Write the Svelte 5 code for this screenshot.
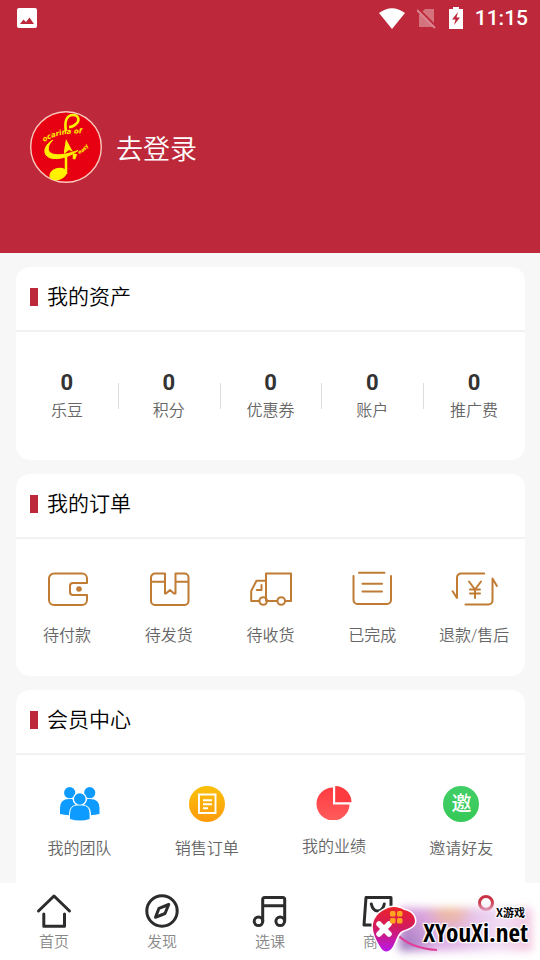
<script lang="ts">
  type Item = { icon: string; label: string };

  const assets = [
    { label: '乐豆', value: 0 },
    { label: '积分', value: 0 },
    { label: '优惠券', value: 0 },
    { label: '账户', value: 0 },
    { label: '推广费', value: 0 },
  ];

  const orders: Item[] = [
    { icon: 'wallet', label: '待付款' },
    { icon: 'parcel', label: '待发货' },
    { icon: 'truck', label: '待收货' },
    { icon: 'done', label: '已完成' },
    { icon: 'refund', label: '退款/售后' },
  ];

  const member: Item[] = [
    { icon: 'team', label: '我的团队' },
    { icon: 'sales', label: '销售订单' },
    { icon: 'chart', label: '我的业绩' },
    { icon: 'invite', label: '邀请好友' },
  ];

  const tabs: Item[] = [
    { icon: 'home', label: '首页' },
    { icon: 'compass', label: '发现' },
    { icon: 'music', label: '选课' },
    { icon: 'shop', label: '商城' },
    { icon: 'me', label: '' },
  ];
</script>

<div class="page">
  <header>
    <div class="status">
      <svg width="20" height="20" viewBox="0 0 20 20" aria-hidden="true">
        <rect width="20" height="20" rx="2" fill="#fff" />
        <path d="M3 16l3.500-4.500 2.500 2.500 3.500-4.500L17 16z" fill="#bd293a" />
      </svg>
      <div class="status-right">
        <svg width="26" height="21" viewBox="0 0 26 21" aria-hidden="true">
          <path d="M0 5Q13-4.500 26 5L13 21z" fill="#fff" />
        </svg>
        <svg width="20" height="21" viewBox="0 0 20 21" aria-hidden="true">
          <path d="M2 7l6-6h9v18H2z" fill="#fff" opacity=".35" />
          <path d="M1 1l18 18" stroke="#bd293a" stroke-width="3" />
          <path d="M0 2l18 18" stroke="#db8590" stroke-width="2" />
        </svg>
        <svg width="14" height="22" viewBox="0 0 14 22" aria-hidden="true">
          <path d="M0 2h4V0h6v2h4v20H0z" fill="#fff" />
          <path d="M9 5L3 12.500h3.500L5 18l6-7.500H7.500z" fill="#bd293a" />
        </svg>
        <span class="time">11:15</span>
      </div>
    </div>
    <button class="profile">
      <svg width="72" height="72" viewBox="0 0 72 72" aria-hidden="true">
        <circle cx="36" cy="36" r="35.300" fill="#e60012" stroke="#f8c9bd" stroke-width="1.400" />
        <path d="M36 20C34 10 37 4 43 4c6 0 7 6 3 9-2 2-4 3-7 3" fill="none" stroke="#fff100" stroke-width="2.600" />
        <path d="M23 29C12 35 12 47 24 47.500c9 .500 17-3 24-8-9 3-16 5-23 4-9-1-8-9-2-14.500z" fill="#fff100" stroke="#fff100" />
        <path d="M34 40l2-12 7 13-4-2-5 4z" fill="#fff100" />
        <path d="M36 46v17M44 43v5l2-5" stroke="#fff100" stroke-width="2.500" fill="none" />
        <ellipse cx="28" cy="63" rx="9" ry="6" transform="rotate(-18 28 63)" fill="#fff100" />
        <path id="arc-top" d="M14 31Q30 20 60 23" fill="none" />
        <path id="arc-side" d="M49 43Q57 40 60 31" fill="none" />
        <text class="logo-top"><textPath href="#arc-top">ocarina of</textPath></text>
        <text class="logo-side"><textPath href="#arc-side">easy</textPath></text>
      </svg>
      <span>去登录</span>
    </button>
  </header>

  <main>
    <section>
      <h2>我的资产</h2>
      <ul class="assets">
        {#each assets as asset}
          <li>
            <button>
              <strong>{asset.value}</strong>
              <span>{asset.label}</span>
            </button>
          </li>
        {/each}
      </ul>
    </section>

    <section>
      <h2>我的订单</h2>
      <ul class="orders">
        {#each orders as item}
          <li>
            <button>
              <svg class="line" width="46" height="36" viewBox="-2 0 46 36" aria-hidden="true">
                {#if item.icon === 'wallet'}
                  <path d="M41 12V7.500a5 5 0 0 0-5-5H8a5 5 0 0 0-5 5V29a5 5 0 0 0 5 5h28a5 5 0 0 0 5-5v-5H27a3 3 0 0 1-3-3v-6a3 3 0 0 1 3-3z" />
                  <circle class="dot" cx="33" cy="18" r="2.800" />
                {:else if item.icon === 'parcel'}
                  <path d="M17 2.500H7a4 4 0 0 0-4 4V30a4 4 0 0 0 4 4h29.500a4 4 0 0 0 4-4V6.500a4 4 0 0 0-4-4H27.500V22.500h-1.500l-4-3.500-4 3.500h-1zM3 10.700h14M27.500 10.700h13" />
                {:else if item.icon === 'truck'}
                  <path d="M10.400 30H2.200V20L7.500 9.700H17M17 30V2.500h25V30h-6M18 30h10.400M12.500 14v5H7.800" />
                  <circle cx="14.200" cy="30" r="3.800" />
                  <circle cx="32.200" cy="30" r="3.800" />
                {:else if item.icon === 'done'}
                  <path d="M8 1.800h25.500M2.500 5v24a4 4 0 0 0 4 4H36a4 4 0 0 0 4-4V5M11.500 12.800h19.500M11.500 20.500h19.500" />
                {:else}
                  <path d="M31.200 2.500H8a4 4 0 0 0-4 4V27L-.400 20.300M12.500 33.500h23a4 4 0 0 0 4-4V7.500l4.400 7.500" />
                  <path d="M16 10.500l6 8 6-8M22 18.500V27M17 18.500h10M17 22.500h10" />
                {/if}
              </svg>
              <span>{item.label}</span>
            </button>
          </li>
        {/each}
      </ul>
    </section>

    <section>
      <h2>会员中心</h2>
      <ul class="member">
        {#each member as item}
          <li>
            <button>
              {#if item.icon === 'team'}
                <svg width="40" height="36" viewBox="0 0 40 36" fill="#0d9bff" aria-hidden="true">
                  <path d="M0 28V22Q0 13 9 13h21q9.500 0 9.500 9v6q-6 1.500-12 1H12q-6 .500-12-1z" />
                  <path d="M9 35V28q0-8 7-9.500a7.500 7.500 0 1 1 7.500 0Q31 20 31 28v7z" fill="#fff" />
                  <circle cx="9.700" cy="6.700" r="5.600" />
                  <circle cx="29.700" cy="6.700" r="5.600" />
                  <circle cx="19.800" cy="13" r="7" fill="#fff" />
                  <circle cx="19.800" cy="13" r="5.800" />
                  <path d="M10 33V28q0-8.500 7-8.500h5.600q7 0 7 8.500v5q-9.600 3-19.600 0z" />
                </svg>
              {:else if item.icon === 'sales'}
                <svg width="36" height="36" viewBox="0 0 36 36" aria-hidden="true">
                  <linearGradient id="gold" x2="0" y2="1">
                    <stop stop-color="#f9c10b" />
                    <stop offset="1" stop-color="#ff9a0c" />
                  </linearGradient>
                  <circle cx="18" cy="18" r="18" fill="url(#gold)" />
                  <path d="M10 8.500h16.500v18.500H10zM14 14.300h9M14 18.300h9M14 22.300h5" fill="none" stroke="#fff" stroke-width="1.900" />
                </svg>
              {:else if item.icon === 'chart'}
                <svg width="36" height="34" viewBox="0 0 36 34" aria-hidden="true">
                  <linearGradient id="coral" x2="0" y2="1">
                    <stop stop-color="#ff3b40" />
                    <stop offset="1" stop-color="#ff5c5c" />
                  </linearGradient>
                  <path d="M17 1.500v17h16.500A16.500 16.500 0 1 1 17 1.500z" fill="url(#coral)" />
                  <path d="M19.200 0A16.500 16.500 0 0 1 35.500 16.200H19.200z" fill="#fc3b40" />
                </svg>
              {:else}
                <b class="invite" aria-hidden="true">邀</b>
              {/if}
              <span>{item.label}</span>
            </button>
          </li>
        {/each}
      </ul>
    </section>
  </main>

  <nav>
    {#each tabs as tab}
      <a href="#{tab.icon}" aria-label={tab.label || '我的'}>
        <svg class="tab-icon" width="36" height="36" viewBox="0 0 36 36" aria-hidden="true">
          {#if tab.icon === 'home'}
            <path d="M2.500 18L18 3l15.500 15M7.800 21v12.300h20.700V21" />
          {:else if tab.icon === 'compass'}
            <circle cx="18" cy="18" r="15.200" />
            <path d="M24.700 11.500L15 15.300l-3.500 9 9.500-3.800z" />
          {:else if tab.icon === 'music'}
            <path d="M10.700 28V6.500a2 2 0 0 1 2-2h18a2 2 0 0 1 2 2V28M10.700 12.700h22" />
            <circle cx="6.500" cy="28.300" r="4.300" />
            <circle cx="28.200" cy="28.300" r="4.300" />
          {:else if tab.icon === 'shop'}
            <path d="M6 4.500h25V32H4zM11.300 11q1.500 7 6.500 7t6.500-7" />
          {:else}
            <circle class="active" cx="18" cy="10" r="6.500" />
          {/if}
        </svg>
        <span>{tab.label}</span>
      </a>
    {/each}
  </nav>

  <div class="badge">
    <div class="glow"></div>
    <svg class="pad" width="48" height="50" viewBox="0 0 48 50" aria-hidden="true">
      <linearGradient id="pad-fill" x2="0" y2="1">
        <stop stop-color="#ee2228" />
        <stop offset=".45" stop-color="#d31a5c" />
        <stop offset="1" stop-color="#b819e8" />
      </linearGradient>
      <path d="M26 30q12 14 40 16" fill="none" stroke="#e0409a" stroke-width="2" />
      <path d="M13 6C20 1 29 3 33 6c7 1 11 6 11 11 0 6-8 8-13 10-5 3-6 11-10 17-3 4-8 5-11 0C5 36 1 28 2 20 3 14 8 8 13 6z" fill="url(#pad-fill)" stroke="#fff" stroke-width="3" paint-order="stroke" />
      <path d="M8 20l10 10M18 20L8 30" stroke="#fff" stroke-width="5.500" stroke-linecap="round" />
      <g fill="#ffa51f">
        <rect x="19" y="7" width="5.500" height="5.500" rx="1.500" />
        <rect x="26" y="7" width="5.500" height="5.500" rx="1.500" />
        <rect x="19" y="14" width="5.500" height="5.500" rx="1.500" />
        <rect x="26" y="14" width="5.500" height="5.500" rx="1.500" />
      </g>
    </svg>
    <div class="badge-text">
      <small>X游戏</small>
      <b>XYouXi.net</b>
    </div>
  </div>
</div>

<style>
  :global(body) {
    margin: 0;
    font-family: Roboto, "Noto Sans CJK SC", sans-serif;
  }
  .page {
    position: relative;
    display: flex;
    flex-direction: column;
    height: 100vh;
    overflow: hidden;
    background: #f7f7f7;
  }
  button {
    padding: 0;
    border: 0;
    background: none;
    color: inherit;
    font: inherit;
    cursor: pointer;
  }
  svg { display: block; flex-shrink: 0; }

  header {
    flex-shrink: 0;
    padding-bottom: 70px;
    background: #bd293a;
    color: #fff;
  }
  .status {
    display: flex;
    align-items: center;
    justify-content: space-between;
    height: 36px;
    padding: 0 12px 0 17px;
  }
  .status-right { display: flex; align-items: center; gap: 12px; }
  .time { font-size: 21px; font-weight: 500; line-height: 24px; }
  .profile {
    display: flex;
    align-items: center;
    gap: 14px;
    margin: 75px 30px 0;
    font-size: 27px;
    font-weight: 350;
    line-height: 36px;
  }
  .profile span { padding-top: 6px; }
  .logo-top, .logo-side {
    fill: #fff100;
    font-family: "DejaVu Sans", sans-serif;
    font-weight: bold;
    font-style: italic;
  }
  .logo-top { font-size: 7px; }
  .logo-side { font-size: 5px; }

  main {
    flex: 1;
    min-height: 0;
    padding: 14px 15px 0 16px;
    overflow-y: auto;
    scrollbar-width: none;
  }
  section {
    margin-bottom: 14px;
    border-radius: 14px;
    background: #fff;
  }
  h2 {
    display: flex;
    align-items: center;
    gap: 9px;
    height: 60px;
    margin: 0;
    padding: 0 0 3px 14px;
    border-bottom: 2px solid #f2f2f2;
    color: #000;
    font-size: 21px;
    font-weight: 350;
    line-height: 27px;
  }
  h2::before { content: ''; width: 8px; height: 18px; background: #bd293a; }
  ul {
    display: flex;
    margin: 0;
    padding: 0;
    list-style: none;
  }
  li { flex: 1; }
  li button {
    display: flex;
    flex-direction: column;
    align-items: center;
    width: 100%;
  }
  li span {
    color: #666;
    font-size: 16px;
    font-weight: 350;
    line-height: 24px;
    white-space: nowrap;
  }
  .assets { padding: 37px 0 35px; }
  .assets li { position: relative; }
  .assets li + li::before {
    content: '';
    position: absolute;
    top: 14px;
    left: 0;
    width: 1px;
    height: 26px;
    background: #ddd;
  }
  .assets strong { color: #333; font-size: 22px; line-height: 28px; }
  .assets span { line-height: 28px; }
  .orders { padding: 32px 0 28px; }
  .orders button { gap: 17px; }
  .line { overflow: visible; fill: none; stroke: #c07c35; stroke-width: 2; stroke-linejoin: round; stroke-linecap: round; }
  .dot { fill: #c07c35; stroke: none; }
  .member { padding: 31px 0 40px; }
  .member button { gap: 15px; }
  .invite {
    width: 36px;
    height: 36px;
    border-radius: 50%;
    background: linear-gradient(#42ce68, #35c957);
    color: #fff;
    font-size: 20px;
    font-weight: 500;
    line-height: 36px;
    text-align: center;
  }

  nav {
    display: flex;
    flex-shrink: 0;
    height: 77px;
    background: #fff;
  }
  nav a {
    flex: 1;
    display: flex;
    flex-direction: column;
    align-items: center;
    padding-top: 10px;
    color: #888;
    font-size: 15px;
    font-weight: 350;
    line-height: 26px;
    text-decoration: none;
  }
  .tab-icon { fill: none; stroke: #2c2c2c; stroke-width: 3; stroke-linecap: round; stroke-linejoin: round; }
  .active { stroke: #c93445; }

  .badge {
    position: absolute;
    right: 12px;
    bottom: 6px;
    display: flex;
    align-items: flex-end;
    pointer-events: none;
  }
  .glow {
    position: absolute;
    inset: 4px -4px 3px 28px;
    background:
      radial-gradient(circle at 38% 0, #f2b98a, transparent 28%),
      radial-gradient(circle at 4% 90%, #a07cc0, transparent 24%),
      linear-gradient(100deg, #d397d8, #dfb2e6 40%, #f1def5 75%, #f4c4dc);
    filter: blur(4px);
  }
  .pad { position: relative; overflow: visible; }
  .badge-text {
    position: relative;
    display: flex;
    flex-direction: column;
    align-items: flex-end;
    padding: 0 0 8px 4px;
    color: #000;
    font-family: "Noto Sans Condensed", "Open Sans Condensed", "Liberation Sans Narrow", "Noto Sans CJK SC", sans-serif;
    text-shadow: 1px 1px 1px #fff, -1px -1px 1px #fff, 1px -1px 1px #fff, -1px 1px 1px #fff, 0 0 3px #fff;
  }
  .badge-text small {
    padding-right: 3px;
    font-family: "Noto Sans CJK SC", sans-serif;
    font-size: 11px;
    font-weight: 700;
    line-height: 12px;
  }
  .badge-text b { font-size: 25px; line-height: 28px; }
</style>
